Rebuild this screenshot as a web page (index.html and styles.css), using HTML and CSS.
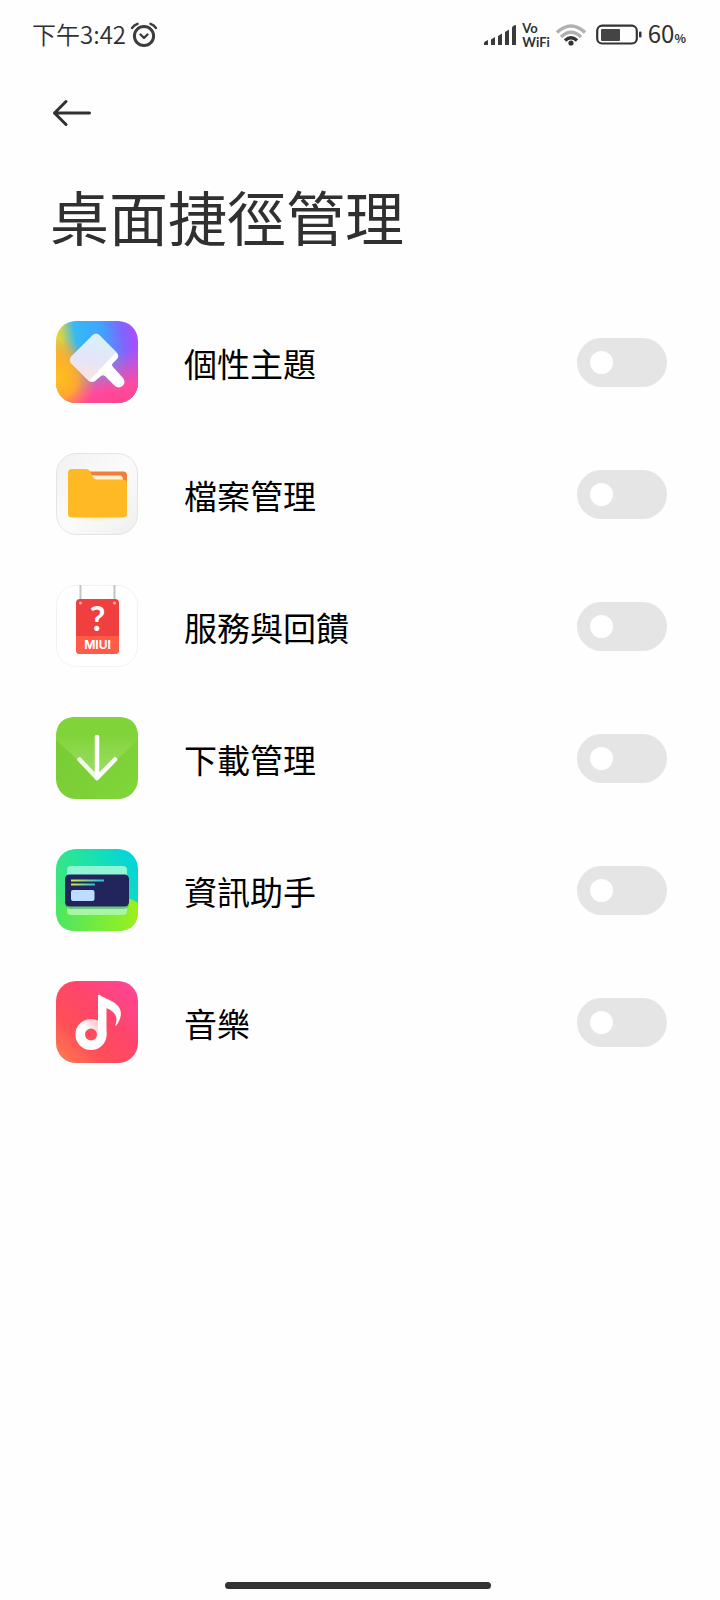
FILE: index.html
```html
<!DOCTYPE html>
<html lang="zh-Hant">
<head>
<meta charset="utf-8">
<meta name="viewport" content="width=device-width, initial-scale=1">
<title>桌面捷徑管理</title>
<link rel="stylesheet" href="styles.css">
</head>
<body>
<div class="status">
  <div class="status-left">
    <span class="clock">下午3:42</span>
    <svg class="alarm" width="28" height="26" viewBox="0 0 28 26" fill="none" stroke="#3c3c3c" stroke-width="3" stroke-linecap="round" stroke-linejoin="round"><circle cx="14" cy="14" r="9.6"/><path d="M10.500 12.500l3.500 3.500 3.500-3.500" stroke-width="2.4"/><path d="M2 6Q4 3 7.500 1.800M26 6Q24 3 20.500 1.800" stroke-width="2.400"/></svg>
  </div>
  <div class="status-right">
    <svg width="32" height="22" viewBox="0 0 32 22" fill="#3a3a3a"><path d="M0 19Q0 18 1 17.500L4 16V21H0ZM7 15.500L11 13V21H7ZM14 12L18 9.500V21H14ZM21 8L25 5.500V21H21ZM28 4Q28 2 30 1.500Q32 .5 32 2V21H28Z"/></svg>
    <span class="vowifi"><span>Vo</span><span>WiFi</span></span>
    <svg class="wifi" width="30" height="22" viewBox="0 0 30 22" fill="none" stroke-width="3.400"><path d="M1 8.500Q15-4.500 29 8.500" stroke="#b0b0b0"/><path d="M5 13Q15 3.500 25 13" stroke="#b0b0b0"/><path d="M9 16.500Q15 11 21 16.500" stroke="#333"/><circle cx="15" cy="19" r="2.600" fill="#333"/></svg>
    <svg class="battery" width="46" height="22" viewBox="0 0 46 22"><rect x="1.200" y="1.700" width="39.600" height="17.800" rx="5" fill="none" stroke="#333" stroke-width="2.200"/><rect x="5" y="5" width="19" height="12" rx="1" fill="#444"/><rect x="43" y="7.500" width="2.500" height="6" rx="1" fill="#333"/></svg>
    <span class="level">60<small>%</small></span>
  </div>
</div>
<header class="header">
  <button class="back" type="button" aria-label="返回"><svg width="40" height="28" viewBox="0 0 40 28" fill="none" stroke="#303030" stroke-width="3" stroke-linecap="round" stroke-linejoin="round"><path d="M37.500 14H2.500M14 2.500L2.500 14 14 25.500"/></svg></button>
  <h1>桌面捷徑管理</h1>
</header>
<main class="list">
  <label class="row">
    <svg class="icon" viewBox="0 0 82 82"><defs>
      <linearGradient id="t1" x1="0" y1=".5" x2="1" y2=".35"><stop offset="0" stop-color="#ecd734"/><stop offset=".12" stop-color="#d2d24c"/><stop offset=".28" stop-color="#36b9f3"/><stop offset=".6" stop-color="#3fa4ff"/><stop offset=".85" stop-color="#8163ff"/><stop offset="1" stop-color="#a94fff"/></linearGradient>
      <linearGradient id="t2" x1=".4" y1=".3" x2=".55" y2="1"><stop offset=".2" stop-color="#ff4fa8" stop-opacity="0"/><stop offset=".8" stop-color="#ff4aa0"/><stop offset="1" stop-color="#ff4692"/></linearGradient>
      <radialGradient id="t3" cx="0" cy=".7" r=".5"><stop offset="0" stop-color="#ffc21c"/><stop offset=".5" stop-color="#ffae26" stop-opacity=".9"/><stop offset="1" stop-color="#ff8a4b" stop-opacity="0"/></radialGradient>
      <linearGradient id="t4" x1=".6" y1="0" x2=".4" y2="1"><stop offset="0" stop-color="#d9f1fb"/><stop offset=".55" stop-color="#e3e5f8"/><stop offset="1" stop-color="#ffe3dc"/></linearGradient></defs>
      <rect width="82" height="82" rx="20" fill="url(#t1)"/><rect width="82" height="82" rx="20" fill="url(#t2)"/><rect width="82" height="82" rx="20" fill="url(#t3)"/>
      <path d="M37 14Q40 11.500 43 14L61 32Q63.500 35 61 38L57 42Q55 44 57 46L67 57Q70 61 67 64.500Q63 68 59 65L49 55Q47 53.500 45 55L39 60Q36 62 33 60L15 42Q13 39 15 36Z" fill="#fff"/><path d="M37 14Q40 11.500 43 14L60 31 33 60 15 42Q13 39 15 36Z" fill="url(#t4)"/></svg>
    <span class="name">個性主題</span><input class="switch" type="checkbox" role="switch">
  </label>
  <label class="row">
    <svg class="icon" viewBox="0 0 82 82"><defs><linearGradient id="f1" x2="1" y2="1"><stop stop-color="#f1f1f2"/><stop offset=".5" stop-color="#fbfbfb"/><stop offset="1" stop-color="#efefed"/></linearGradient><radialGradient id="f2"><stop stop-color="#ffdf9a"/><stop offset="1" stop-color="#fff" stop-opacity="0"/></radialGradient></defs>
      <rect x=".5" y=".5" width="81" height="81" rx="20" fill="url(#f1)" stroke="#e4e4e4"/><ellipse cx="41" cy="63" rx="34" ry="9" fill="url(#f2)"/>
      <path d="M32 18.500H67Q71 18.500 71 22.500V34H32Z" fill="#f47c39"/><path d="M34 22.500H64Q67 22.500 67 28H36Z" fill="#fff0d6"/>
      <path d="M12 20Q12 16 16 16H30Q33 16 34.500 19L37 24Q38 26.500 41 26.500H67Q71 26.500 71 30V61Q71 64.500 67 64.500H16Q12 64.500 12 61Z" fill="#ffb925"/></svg>
    <span class="name">檔案管理</span><input class="switch" type="checkbox" role="switch">
  </label>
  <label class="row">
    <svg class="icon" viewBox="0 0 82 82"><rect x=".5" y=".5" width="81" height="81" rx="20" fill="#fff" stroke="#f2f2f2"/>
      <path d="M24.500 0V18M58.500 0V18" stroke="#c4c4c4" stroke-width="2"/><rect x="20" y="14" width="43" height="55" rx="4" fill="#ef3f3f"/><path d="M20 51H63V65Q63 69 59 69H24Q20 69 20 65Z" fill="#ff5b47"/><circle cx="24.500" cy="18" r="1.500" fill="#ffaca5"/><circle cx="58.500" cy="18" r="1.500" fill="#ffaca5"/>
      <text class="mark" x="41.500" y="46" text-anchor="middle">?</text><text class="brand" x="41.500" y="64" text-anchor="middle">MIUI</text></svg>
    <span class="name">服務與回饋</span><input class="switch" type="checkbox" role="switch">
  </label>
  <label class="row">
    <svg class="icon" viewBox="0 0 82 82"><defs><linearGradient id="d1" x2="1" y2="1"><stop stop-color="#78c936"/><stop offset="1" stop-color="#80d638"/></linearGradient><linearGradient id="d2" x2="0" y2="1"><stop offset=".3" stop-color="#81d33a"/><stop offset="1" stop-color="#a0df6b"/></linearGradient></defs>
      <rect width="82" height="82" rx="20" fill="url(#d1)"/><path d="M0 23V20Q0 0 20 0H62Q82 0 82 20V23L41 61Z" fill="url(#d2)"/>
      <path d="M41 61L23.500 42.500" stroke="#f1fbe8" stroke-width="4.500" stroke-linecap="round"/><path d="M41 20V61L59 42.500" fill="none" stroke="#fff" stroke-width="4.500" stroke-linecap="round" stroke-linejoin="round"/></svg>
    <span class="name">下載管理</span><input class="switch" type="checkbox" role="switch">
  </label>
  <label class="row">
    <svg class="icon" viewBox="0 0 82 82"><defs><linearGradient id="a1" x1="1" y1=".3" x2="0" y2=".8"><stop stop-color="#05d5d7"/><stop offset=".5" stop-color="#22e4a0"/><stop offset="1" stop-color="#4be66b"/></linearGradient><linearGradient id="a2"><stop stop-color="#4be664"/><stop offset="1" stop-color="#9cf01b"/></linearGradient><linearGradient id="a3"><stop stop-color="#d6ee35"/><stop offset="1" stop-color="#24bfe0"/></linearGradient></defs>
      <rect width="82" height="82" rx="20" fill="url(#a1)"/><path d="M0 55Q45 60 67 48Q77 50 82 54V62Q82 82 62 82H20Q0 82 0 62Z" fill="url(#a2)"/>
      <rect x="11" y="17" width="60" height="18" rx="4" fill="#8ff5d4"/><rect x="11" y="48" width="60" height="18" rx="4" fill="#a9f6a2"/>
      <rect x="9" y="26" width="64" height="34" rx="5" fill="#16805f" opacity=".4"/><rect x="9" y="25.500" width="64" height="32" rx="4.500" fill="#22255c"/>
      <rect x="15" y="30.500" width="33" height="2" fill="url(#a3)"/><rect x="15" y="34.500" width="24" height="2" fill="url(#a3)"/><rect x="15" y="41" width="23.500" height="11" rx="2" fill="#bddcff"/></svg>
    <span class="name">資訊助手</span><input class="switch" type="checkbox" role="switch">
  </label>
  <label class="row">
    <svg class="icon" viewBox="0 0 82 82"><defs><linearGradient id="m1" x1="0" y1="1" x2="1" y2="0"><stop stop-color="#ff8050"/><stop offset=".3" stop-color="#ff4f58"/><stop offset=".6" stop-color="#ff456c"/><stop offset="1" stop-color="#ff459f"/></linearGradient><linearGradient id="m2" x1="0" y1="1" x2="1" y2="0"><stop offset=".55" stop-color="#fff"/><stop offset=".8" stop-color="#ffd4d9"/></linearGradient></defs>
      <rect width="82" height="82" rx="20" fill="url(#m1)"/><circle cx="35" cy="53.500" r="10.800" fill="none" stroke="url(#m2)" stroke-width="9.600"/>
      <path d="M42 15Q42 13 44 14C49 18 57 19 62 25C67 31 65 38 60 45Q59 45 60 42C62 34 57 30 50.500 27V54Q50 60 46 64L42 58Z" fill="#fff"/></svg>
    <span class="name">音樂</span><input class="switch" type="checkbox" role="switch">
  </label>
</main>
<div class="home"></div>
</body>
</html>
```
FILE: styles.css
```css
* {
  box-sizing: border-box;
}

body {
  margin: 0;
  min-height: 100vh;
  display: flex;
  flex-direction: column;
  background: #fefefe;
  color: #000;
  font-family: "Noto Sans CJK TC", sans-serif;
}

.status {
  display: flex;
  justify-content: space-between;
  align-items: center;
  height: 70px;
  padding: 0 34px 0 32px;
  color: #303030;
}

.status-left,
.status-right {
  display: flex;
  align-items: center;
}

.status-left {
  gap: 4px;
}

.status-right {
  gap: 6px;
}

.clock {
  padding-bottom: 2px;
  font-size: 24px;
  font-weight: 350;
  line-height: 32px;
}

.vowifi {
  display: flex;
  flex-direction: column;
  font: 700 13px/14px Lato, sans-serif;
}

.battery {
  margin-left: 4px;
}

.level {
  font: 400 24px/32px "Noto Sans CJK TC", sans-serif;
}

.level small {
  font-size: 12px;
  font-weight: 700;
}

.header {
  padding: 27px 50px 0;
}

.back {
  display: block;
  padding: 2px;
  border: 0;
  background: none;
}

.back svg {
  display: block;
}

h1 {
  margin: 45px 0 0;
  color: #303030;
  font-size: 59px;
  font-weight: 400;
  line-height: 84px;
}

.list {
  flex: 1;
  padding: 38px 53px 0 56px;
}

.row {
  display: flex;
  align-items: center;
  height: 132px;
}

.icon {
  flex: none;
  width: 82px;
  height: 82px;
}

.mark {
  fill: #fff;
  font: 700 34px Lato, sans-serif;
}

.brand {
  fill: #fff;
  font: 700 12px Inter, sans-serif;
}

.name {
  flex: 1;
  margin-left: 46px;
  padding-top: 2px;
  font-size: 33px;
  line-height: 48px;
}

.switch {
  appearance: none;
  flex: none;
  width: 90px;
  height: 49px;
  margin: 0;
  padding: 13px;
  border-radius: 25px;
  background: #e5e5e5;
}

.switch::before {
  content: "";
  display: block;
  width: 23px;
  height: 23px;
  border-radius: 50%;
  background: #fff;
}

.switch:checked {
  background: #3482ff;
}

.switch:checked::before {
  margin-left: auto;
}

.home {
  align-self: center;
  width: 37%;
  height: 7px;
  margin: 0 4px 11px 0;
  border-radius: 4px;
  background: #333;
}
```
